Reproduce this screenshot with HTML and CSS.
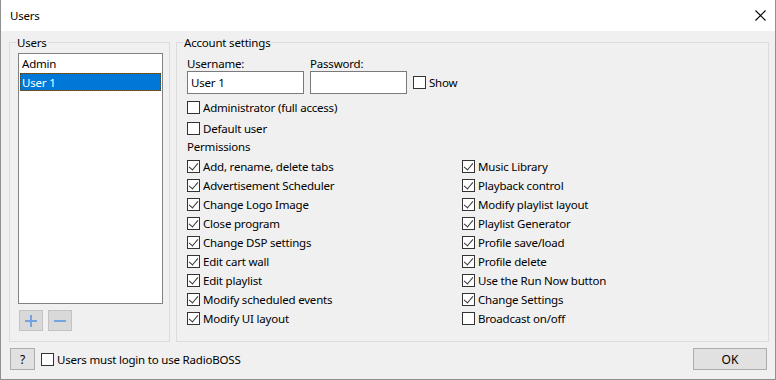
FILE: index.html
```html
<!DOCTYPE html>
<html lang="en">
<head>
    <meta charset="UTF-8">
    <title>Users</title>
    <link rel="stylesheet" href="styles.css">
</head>
<body>
    <div class="window">
        <div class="titlebar">
            <span class="title">Users</span>
            <svg class="close" width="11" height="11" viewBox="0 0 11 11">
                <path d="M0.5 0.5 L10.5 10.5 M10.5 0.5 L0.5 10.5" stroke="#000" stroke-width="1.1" fill="none"/>
            </svg>
        </div>
        <div class="content">
            <div class="groups">
                <fieldset class="group users">
                    <legend>Users</legend>
                    <div class="listbox">
                        <div class="item">Admin</div>
                        <div class="item selected">User 1</div>
                    </div>
                    <div class="tools">
                        <button class="tool">
                            <svg width="14" height="14" viewBox="0 0 14 14"><path d="M7 1 V13 M1 7 H13" stroke="#76a2de" stroke-width="2"/></svg>
                        </button>
                        <button class="tool">
                            <svg width="14" height="14" viewBox="0 0 14 14"><path d="M1 7 H13" stroke="#76a2de" stroke-width="2"/></svg>
                        </button>
                    </div>
                </fieldset>
                <fieldset class="group account">
                    <legend>Account settings</legend>
                    <div class="fields">
                        <div class="field">
                            <label>Username:</label>
                            <div class="input name">User 1</div>
                        </div>
                        <div class="field">
                            <label>Password:</label>
                            <div class="input pass"></div>
                        </div>
                        <div class="check show"><span class="box"></span>Show</div>
                    </div>
                    <div class="check admin"><span class="box"></span>Administrator (full access)</div>
                    <div class="check default"><span class="box"></span>Default user</div>
                    <div class="label perm">Permissions</div>
                    <div class="perms">
                        <div class="col left">
                            <div class="check"><span class="box on"></span>Add, rename, delete tabs</div>
                            <div class="check"><span class="box on"></span>Advertisement Scheduler</div>
                            <div class="check"><span class="box on"></span>Change Logo Image</div>
                            <div class="check"><span class="box on"></span>Close program</div>
                            <div class="check"><span class="box on"></span>Change DSP settings</div>
                            <div class="check"><span class="box on"></span>Edit cart wall</div>
                            <div class="check"><span class="box on"></span>Edit playlist</div>
                            <div class="check"><span class="box on"></span>Modify scheduled events</div>
                            <div class="check"><span class="box on"></span>Modify UI layout</div>
                        </div>
                        <div class="col">
                            <div class="check"><span class="box on"></span>Music Library</div>
                            <div class="check"><span class="box on"></span>Playback control</div>
                            <div class="check"><span class="box on"></span>Modify playlist layout</div>
                            <div class="check"><span class="box on"></span>Playlist Generator</div>
                            <div class="check"><span class="box on"></span>Profile save/load</div>
                            <div class="check"><span class="box on"></span>Profile delete</div>
                            <div class="check"><span class="box on"></span>Use the Run Now button</div>
                            <div class="check"><span class="box on"></span>Change Settings</div>
                            <div class="check"><span class="box"></span>Broadcast on/off</div>
                        </div>
                    </div>
                </fieldset>
            </div>
            <div class="bottom">
                <button class="btn help">?</button>
                <div class="check login"><span class="box"></span>Users must login to use RadioBOSS</div>
                <button class="btn ok">OK</button>
            </div>
        </div>
    </div>
</body>
</html>
```

FILE: styles.css
```css
*{
    margin: 0;
    padding: 0;
    box-sizing: border-box;
}
body{
    font-family: "Noto Sans", "Open Sans", sans-serif;
    font-size: 11.5px;
    letter-spacing: -0.2px;
    color: #000;
    background: #fff;
}
.window{
    width: 776px;
    height: 380px;
    border: 1px solid #8f8f8f;
    border-top: none;
    background: #f0f0f0;
    display: flex;
    flex-direction: column;
}
.titlebar{
    height: 31px;
    background: #fff;
    display: flex;
    align-items: center;
    justify-content: space-between;
    padding: 0 9px 0 9px;
}
.title{
    line-height: 15px;
}
.close{
    display: block;
}
.content{
    flex: 1;
    padding: 4px 6px 0 8px;
}
.groups{
    display: flex;
    gap: 6px;
    height: 307px;
}
.group{
    border: 1px solid #dcdcdc;
    height: 100%;
}
.group legend{
    padding: 0 1px;
    line-height: 15px;
}
.users{
    width: 161px;
    padding: 3px 6px 0 8px;
}
.users legend{
    margin-left: -2px;
}
.listbox{
    width: 145px;
    height: 251px;
    background: #fff;
    border: 1px solid #828282;
    padding: 1px;
}
.item{
    height: 18px;
    line-height: 17px;
    padding-left: 2px;
}
.selected{
    background: #0078d7;
    color: #fff;
    border: 1px dotted #5a3d10;
    padding-left: 1px;
}
.tools{
    display: flex;
    gap: 5px;
    margin-top: 6px;
    padding-left: 1px;
}
.tool{
    width: 24px;
    height: 21px;
    background: #d9d9d9;
    border: 1px solid #c3c3c3;
    display: flex;
    align-items: center;
    justify-content: center;
}
.account{
    flex: 1;
    padding: 6px 10px 0 10px;
}
.account legend{
    margin-left: -4px;
}
.fields{
    display: flex;
    align-items: flex-end;
    gap: 6px;
}
.field label{
    display: block;
    line-height: 15px;
}
.input{
    height: 23px;
    border: 1px solid #7a7a7a;
    background: #fff;
    padding: 0 3px;
    line-height: 21px;
}
.name{
    width: 117px;
}
.pass{
    width: 97px;
}
.check{
    display: flex;
    align-items: center;
    height: 19px;
    white-space: nowrap;
}
.box{
    width: 13px;
    height: 13px;
    border: 1px solid #333;
    background: #fff;
    margin-right: 3px;
    flex: none;
    position: relative;
}
.box.on::after{
    content: "";
    position: absolute;
    left: 3px;
    top: 0;
    width: 4px;
    height: 8px;
    border: solid #333;
    border-width: 0 1px 1px 0;
    transform: rotate(40deg);
}
.show{
    height: 23px;
}
.admin{
    margin-top: 4px;
}
.default{
    margin-top: 2px;
}
.label{
    line-height: 15px;
}
.perm{
    margin-top: 1px;
}
.perms{
    display: flex;
    margin-top: 3px;
}
.col.left{
    width: 275px;
}
.bottom{
    display: flex;
    align-items: center;
    margin-top: 6px;
    padding-left: 1px;
}
.btn{
    height: 22px;
    background: #e1e1e1;
    border: 1px solid #adadad;
    font-family: inherit;
    font-size: 12px;
    color: #000;
}
.help{
    width: 25px;
}
.login{
    margin-left: 6px;
}
.ok{
    width: 74px;
    margin-left: auto;
    margin-right: 2px;
}
```
